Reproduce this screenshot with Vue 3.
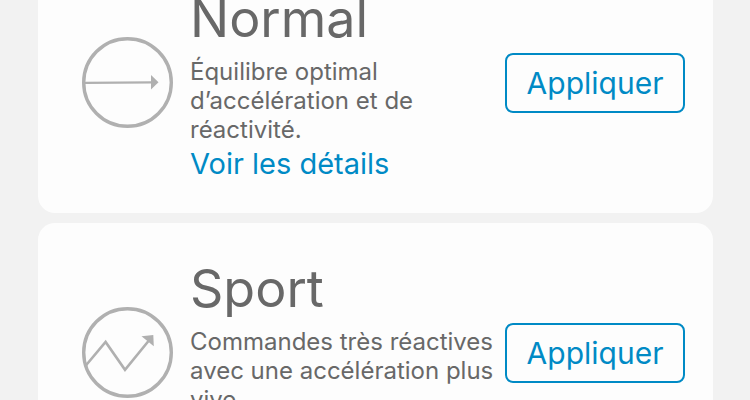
<script setup>
const modes = [
  {
    id: 'normal',
    title: 'Normal',
    description: 'Équilibre optimal d’accélération et de réactivité.',
  },
  {
    id: 'sport',
    title: 'Sport',
    description: 'Commandes très réactives avec une accélération plus vive.',
  },
]
</script>

<template>
  <main class="page">
    <div class="list">
      <section v-for="mode in modes" :key="mode.id" class="card">
        <svg class="icon" viewBox="0 0 91 91" aria-hidden="true">
          <circle cx="45.5" cy="45.5" r="43.8" fill="none" stroke="#b0b0b0" stroke-width="3.4" />
          <template v-if="mode.id === 'normal'">
            <path d="M3 45.9L70 45.3" fill="none" stroke="#b0b0b0" stroke-width="2.2" />
            <path d="M69 38L76.5 45.2L69 52.5Z" fill="#b0b0b0" />
          </template>
          <template v-else>
            <path d="M3 59.5L23.6 35L43 62.8L66.5 34" fill="none" stroke="#b0b0b0" stroke-width="2.6" />
            <path d="M59.5 29.3L71.3 28L71.8 39.3Z" fill="#b0b0b0" />
          </template>
        </svg>
        <div class="body">
          <h2 class="title">{{ mode.title }}</h2>
          <p class="description">{{ mode.description }}</p>
          <a class="details" href="#">Voir les détails</a>
        </div>
        <button class="apply" type="button">Appliquer</button>
      </section>
    </div>
  </main>
</template>

<style>
body {
  background: #f2f2f2;
}
</style>

<style scoped>
.page {
  height: 100vh;
  overflow: hidden;
  font-family: Inter, "Liberation Sans", sans-serif;
  color: #686868;
}

/* The list is scrolled part of the way down its first card. */
.list {
  display: flex;
  flex-direction: column;
  gap: 10px;
  margin-top: -47px;
  padding: 0 37px 0 38px;
}

.card {
  display: flex;
  align-items: center;
  box-sizing: border-box;
  min-height: 260px;
  padding: 30px 28px 30px 44px;
  border-radius: 17px;
  background: #fdfdfd;
}

.icon {
  flex: none;
  width: 91px;
  height: 91px;
  margin-bottom: 1px;
}

.body {
  flex: 1;
  min-width: 0;
  margin-left: 17px;
}

.title {
  margin: 0;
  font-size: 52px;
  line-height: 72px;
  font-weight: 400;
}

.description {
  margin: 2px 0 0;
  font-size: 24px;
  line-height: 29px;
}

.details {
  display: block;
  font-size: 29px;
  line-height: 39px;
  color: #008ac5;
  text-decoration: none;
}

.apply {
  flex: none;
  width: 180px;
  height: 60px;
  padding: 0;
  border: 2px solid #008ac5;
  border-radius: 8px;
  background: transparent;
  font: inherit;
  font-size: 30px;
  color: #008ac5;
}
</style>
